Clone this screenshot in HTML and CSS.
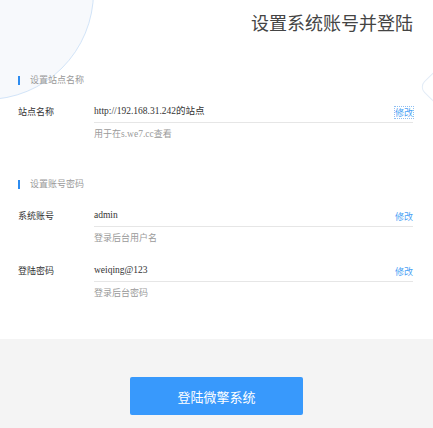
FILE: index.html
```html
<!DOCTYPE html>
<html lang="zh-CN">
<head>
<meta charset="utf-8">
<title>设置系统账号并登陆</title>
<link rel="stylesheet" href="styles.css">
</head>
<body>
<div class="page">
  <div class="deco-circle"></div>
  <div class="deco-diamond"></div>
  <main class="main">
    <h1 class="title">设置系统账号并登陆</h1>

    <section class="section first">
      <div class="section-head"><span class="bar"></span>设置站点名称</div>
      <div class="field">
        <div class="label">站点名称</div>
        <div class="control">
          <div class="row">
            <span class="value">http://192.168.31.242的站点</span>
            <a class="edit focused">修改</a>
          </div>
          <div class="hint">用于在<span class="latin">s.we7.cc</span>查看</div>
        </div>
      </div>
    </section>

    <section class="section second">
      <div class="section-head"><span class="bar"></span>设置账号密码</div>
      <div class="field">
        <div class="label">系统账号</div>
        <div class="control">
          <div class="row">
            <span class="value">admin</span>
            <a class="edit">修改</a>
          </div>
          <div class="hint">登录后台用户名</div>
        </div>
      </div>
      <div class="field next">
        <div class="label">登陆密码</div>
        <div class="control">
          <div class="row">
            <span class="value">weiqing@123</span>
            <a class="edit">修改</a>
          </div>
          <div class="hint">登录后台密码</div>
        </div>
      </div>
    </section>
  </main>
  <footer class="footer">
    <button class="login-btn">登陆微擎系统</button>
  </footer>
</div>
</body>
</html>
```

FILE: styles.css
```css
html, body {
  margin: 0;
  padding: 0;
  background: #fff;
}

.page {
  position: relative;
  width: 433px;
  height: 428px;
  overflow: hidden;
  display: flex;
  flex-direction: column;
  font-family: "Noto Sans CJK SC", "Noto Sans", sans-serif;
  color: #333;
}

.deco-circle {
  position: absolute;
  left: -122px;
  top: -116px;
  width: 214px;
  height: 214px;
  border-radius: 50%;
  background: #f7f9fc;
  border: 1px solid #d2e4f8;
  z-index: 0;
}

.deco-diamond {
  position: absolute;
  left: 428px;
  top: 64px;
  width: 44px;
  height: 44px;
  border-radius: 8px;
  border: 1px solid #e3ecf7;
  transform: rotate(45deg);
  z-index: 0;
}

.main {
  position: relative;
  z-index: 1;
  height: 339px;
  padding: 0 20px 0 18px;
  box-sizing: border-box;
}

.title {
  margin: 0;
  padding-top: 12px;
  text-align: right;
  font-size: 18px;
  line-height: 20px;
  font-weight: 400;
  color: #444;
}

.section.first {
  margin-top: 42px;
}

.section.second {
  margin-top: 38px;
}

.section-head {
  display: flex;
  align-items: center;
  height: 12px;
  font-size: 9px;
  line-height: 12px;
  color: #9a9a9a;
}

.bar {
  width: 2px;
  height: 9px;
  background: #2d8cf0;
  margin-right: 10px;
}

.field {
  display: flex;
  margin-top: 19px;
}

.field.next {
  margin-top: 20px;
}

.label {
  width: 76px;
  flex: none;
  font-size: 9px;
  line-height: 12px;
  padding-top: 1px;
  color: #333;
}

.control {
  flex: 1;
}

.row {
  display: flex;
  justify-content: space-between;
  align-items: center;
  height: 12px;
  padding-bottom: 5px;
  border-bottom: 1px solid #e6e6e6;
}

.value {
  font-family: "Liberation Serif", "Noto Sans CJK SC", serif;
  font-size: 9.5px;
  line-height: 12px;
  color: #333;
}

.edit {
  font-size: 9px;
  line-height: 11px;
  color: #4a9ff5;
  cursor: pointer;
  margin-top: 2px;
}

.edit.focused {
  outline: 1px dotted #8fbff2;
  outline-offset: 0;
}

.hint {
  margin-top: 5px;
  font-size: 9px;
  line-height: 12px;
  color: #9a9a9a;
}

.latin {
  font-family: "Liberation Serif", serif;
  font-size: 9.5px;
}

.footer {
  position: relative;
  z-index: 1;
  flex: 1;
  background: #f4f4f4;
  display: flex;
  justify-content: center;
  align-items: flex-start;
}

.login-btn {
  margin-top: 38px;
  width: 173px;
  height: 38px;
  border: none;
  border-radius: 2px;
  background: #3899fc;
  color: #fff;
  font-family: "Noto Sans CJK SC", sans-serif;
  font-size: 13px;
  letter-spacing: 0;
  cursor: pointer;
}
```
